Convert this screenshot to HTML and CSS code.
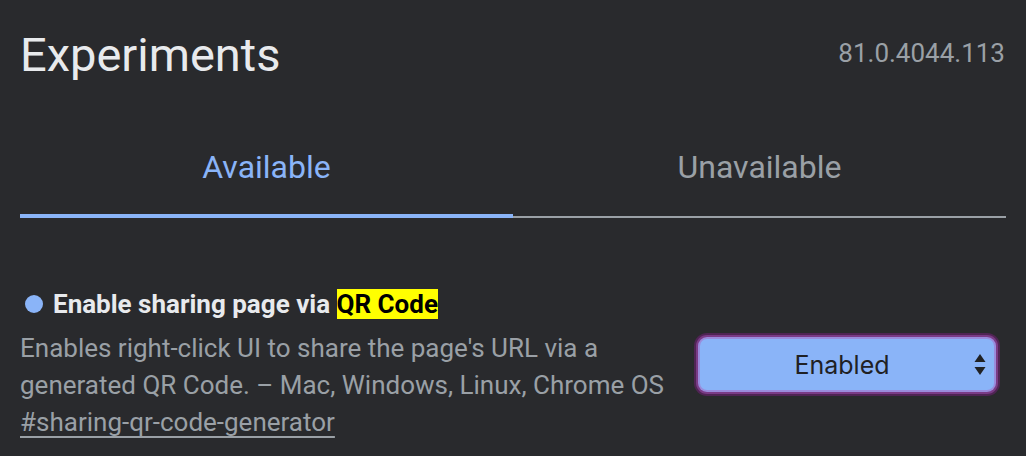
FILE: index.html
```html
<!DOCTYPE html>
<html lang="en">
<head>
<meta charset="utf-8">
<title>Experiments</title>
<link rel="stylesheet" href="styles.css">
</head>
<body>
<div class="page">
  <header class="header">
    <h1 class="title">Experiments</h1>
    <span class="version">81.0.4044.113</span>
  </header>
  <nav class="tabs">
    <div class="tab tab-active">Available</div>
    <div class="tab">Unavailable</div>
  </nav>
  <section class="feature">
    <div class="feature-text">
      <div class="feature-name"><span class="dot"></span><span>Enable sharing page via <mark class="hl">QR Code</mark></span></div>
      <p class="desc">Enables right-click UI to share the page's URL via a generated QR Code. – Mac, Windows, Linux, Chrome OS</p>
      <a class="link" href="#sharing-qr-code-generator">#sharing-qr-code-generator</a>
    </div>
    <div class="select">
      <span class="select-label">Enabled</span>
      <svg class="arrows" width="12" height="22" viewBox="0 0 12 22"><path d="M6 0 L11.5 8 L0.5 8 Z" fill="#202124"/><path d="M0.5 13 L11.5 13 L6 21 Z" fill="#202124"/></svg>
    </div>
  </section>
</div>
</body>
</html>
```

FILE: styles.css
```css
html, body {
  margin: 0;
  padding: 0;
  background: #292a2d;
}
body {
  font-family: Roboto, "Liberation Sans", sans-serif;
  color: #9aa0a6;
}
.page {
  padding: 0 20px;
}
.header {
  display: flex;
  justify-content: space-between;
  align-items: flex-start;
  padding-top: 27px;
}
.title {
  margin: 0;
  font-size: 47px;
  font-weight: 400;
  line-height: 55px;
  color: #e8eaed;
}
.version {
  margin-top: 11px;
  margin-right: 1px;
  font-size: 26px;
  line-height: 30px;
  color: #9aa0a6;
}
.tabs {
  display: flex;
  margin-top: 65px;
}
.tab {
  flex: 1;
  text-align: center;
  font-size: 32px;
  line-height: 40px;
  color: #9aa0a6;
  padding-bottom: 29px;
  border-bottom: 2px solid #9aa0a6;
}
.tab-active {
  color: #8ab4f8;
  padding-bottom: 27px;
  border-bottom: 4px solid #8ab4f8;
}
.feature {
  display: flex;
  align-items: center;
  justify-content: space-between;
  margin-top: 71px;
}
.feature-text {
  width: 660px;
}
.feature-name {
  display: flex;
  align-items: center;
  gap: 10px;
  font-size: 26px;
  font-weight: 700;
  line-height: 30px;
  color: #e8eaed;
}
.dot {
  width: 18px;
  height: 18px;
  margin-left: 5px;
  border-radius: 50%;
  background: #8ab4f8;
  flex: none;
}
.hl {
  background: #ffff00;
  color: #000;
}
.desc {
  margin: 11px 0 0;
  font-size: 26px;
  line-height: 36.5px;
  color: #9aa0a6;
}
.link {
  display: block;
  margin-top: 1px;
  font-size: 26px;
  line-height: 36.5px;
  color: #9aa0a6;
  text-decoration: underline;
  text-underline-offset: 5px;
}
.select {
  position: relative;
  box-sizing: border-box;
  width: 294px;
  height: 51px;
  margin-right: 12px;
  padding-right: 10px;
  border-radius: 7px;
  background: #8ab4f8;
  box-shadow: 0 0 0 2px #9a8cdc, 0 0 0 4px #7a3b86, 0 0 0 6px #4f2454;
  display: flex;
  align-items: center;
  justify-content: center;
}
.select-label {
  font-family: Inter, Roboto, sans-serif;
  font-size: 25px;
  color: #202124;
}
.arrows {
  position: absolute;
  right: 8px;
  top: 15px;
}
```
